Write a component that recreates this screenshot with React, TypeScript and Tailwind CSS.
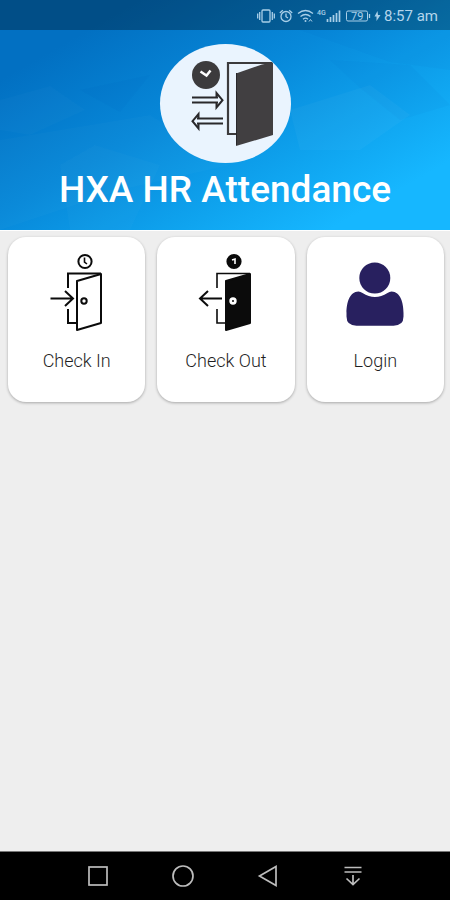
import React from "react";

function HeaderArtwork() {
  return (
    <svg
      className="absolute inset-0 h-full w-full"
      viewBox="0 0 450 230"
      preserveAspectRatio="none"
      aria-hidden="true"
    >
      <defs>
        <linearGradient id="sky" gradientUnits="userSpaceOnUse" x1="140" y1="0" x2="285" y2="255">
          <stop offset="0" stopColor="#0270c2" />
          <stop offset="0.4" stopColor="#0788d9" />
          <stop offset="0.75" stopColor="#0fa4ef" />
          <stop offset="1" stopColor="#16b7ff" />
        </linearGradient>
      </defs>
      <rect width="450" height="230" fill="url(#sky)" />
      <g fill="#ffffff">
        <polygon points="0,100 50,86 85,110 30,135 0,130" opacity="0.02" />
        <polygon points="0,140 150,115 230,165 120,190 0,230" opacity="0.02" />
        <polygon points="60,165 95,145 160,165 130,230 70,230" opacity="0.02" />
        <polygon points="290,110 370,85 410,115 360,150 300,150" opacity="0.03" />
      </g>
      <g fill="#0058b0">
        <polygon points="330,60 410,65 450,105 400,120 360,88" opacity="0.04" />
        <polygon points="80,90 150,75 120,112" opacity="0.05" />
        <polygon points="300,30 450,30 450,70 390,62" opacity="0.04" />
      </g>
    </svg>
  );
}

function StatusBar() {
  return (
    <div className="relative flex h-[30px] items-center justify-end bg-black/30 pr-3 pt-[2px] text-[#a9cfe8]">
      <svg width="114" height="20" viewBox="0 0 114 20" fill="none" stroke="currentColor" strokeWidth="1.3" aria-hidden="true">
        <rect x="5" y="4" width="8" height="12" rx="1" />
        <path d="M2.700 6v8M15.300 6v8M.700 7.500v5M17.300 7.500v5" />
        <circle cx="29" cy="10.500" r="5" />
        <path d="M29 7.500v3.200l2 1.300M22.800 7l3-2.800M35.200 7l-3-2.800" />
        <path d="M41 7.500q7.500-6 15 0M43.500 10.500q5-4 10 0M46 13.200q2.500-2 5 0" />
        <circle cx="48.500" cy="15" r="1" fill="currentColor" stroke="none" />
        <path d="M52 15.500l1.500-2 1.500 2" strokeWidth="1" />
        <path d="M70.500 16v-3M73.500 16v-5M76.500 16V9M79.500 16V7M82.500 16V4.500" strokeWidth="1.700" />
        <rect x="89.500" y="5" width="21" height="10" rx="1.500" strokeWidth="1" />
        <path d="M112.500 8v4" />
        <text x="60" y="9" fontSize="7" fontFamily="Roboto, sans-serif" fontWeight="500" fill="currentColor" stroke="none">4G</text>
        <text x="94" y="14" fontSize="11" fontFamily="Roboto, sans-serif" fill="currentColor" stroke="none">79</text>
      </svg>
      <svg className="ml-[3px]" width="7" height="12" viewBox="0 0 7 12" fill="currentColor" aria-hidden="true">
        <path d="M3.500 1L.500 6.500h2L2.500 11l4-6h-2.500z" />
      </svg>
      <time className="ml-[3px] text-[15px] leading-5 text-[#b4d5eb]">8:57 am</time>
    </div>
  );
}

function AppLogo() {
  return (
    <svg width="132" height="120" viewBox="159 44 132 120" role="img" aria-label="HXA HR Attendance logo">
      <ellipse cx="225.500" cy="103.500" rx="65.500" ry="59.500" fill="#eaf4fe" />
      <circle cx="206" cy="75" r="14" fill="#3c3b3d" />
      <path d="M200.500 71.500l6 4 4-5" fill="none" stroke="#fff" strokeWidth="2.500" />
      <g fill="none" stroke="#29282b" strokeWidth="2">
        <path d="M192 97.500h26M192 102.500h26M216.500 97.500v-4.500l6 7.200-6 7.200v-4.500" />
        <path d="M223 118.500h-26M223 123.500h-26M198.500 118.500v-4.500l-6 7.200 6 7.200v-4.500" />
        <path d="M237 134h-9V63h44" strokeWidth="2.200" stroke="#3c3b3d" />
      </g>
      <path d="M236 73.500L262 64.500 273 62.500V135L236 146z" fill="#413f41" />
      <path d="M236.500 73V145" stroke="#29282b" />
    </svg>
  );
}

function DoorIcon({ leaving }: { leaving: boolean }) {
  return (
    <svg width="56" height="80" viewBox="48 252 56 80" fill="none" stroke="#0b0b0b" strokeWidth="2" aria-hidden="true">
      <circle cx="84" cy="261.500" r="6.600" fill={leaving ? "#0b0b0b" : "none"} />
      {leaving ? (
        <path d="M82 260l3-1v5" stroke="#fff" strokeWidth="1.600" />
      ) : (
        <path d="M83.500 257.500v4.500l2.500 2" strokeWidth="1.600" />
      )}
      <path d="M67 288V273.500H100M67 309v14h9" strokeWidth={leaving ? 1.6 : 2} />
      <path d="M76 281L100 274v49L76 330z" fill={leaving ? "#0b0b0b" : "#fff"} strokeLinejoin="round" />
      <circle cx="83" cy="301" r="2.700" fill="#fff" stroke={leaving ? "#fff" : "#0b0b0b"} />
      {leaving && <circle cx="83" cy="301" r="1" fill="#0b0b0b" stroke="none" />}
      {leaving ? <path d="M72 298.500H50M58 291l-8 7.500 8 7.500" /> : <path d="M49.500 298.500H72M64 291l8 7.500-8 7.500" />}
    </svg>
  );
}

function UserIcon() {
  return (
    <svg width="58" height="80" viewBox="345.500 252 58 80" fill="#28205f" aria-hidden="true">
      <circle cx="374.300" cy="278" r="15.500" />
      <path d="M358 291.500C349 291.500 346 303 346 313v3.500Q346 325.700 356 325.700H393Q403 325.700 403 316.500V313C403 303 400 291.500 391 291.500Q389 291.500 387 293Q374.500 301 362 293Q360 291.500 358 291.500z" />
    </svg>
  );
}

function ActionCard({ label, children }: { label: string; children: React.ReactNode }) {
  return (
    <button
      type="button"
      className="flex h-[165px] flex-col items-center rounded-[18px] bg-white pt-[15px] shadow-[0_1px_3px_rgba(0,0,0,0.3)]"
    >
      {children}
      <span className="mt-[17px] text-lg font-light leading-6 text-[#1f1f1f]">{label}</span>
    </button>
  );
}

function NavButton({ label, children }: { label: string; children: React.ReactNode }) {
  return (
    <button type="button" aria-label={label} className="flex h-12 w-[85px] items-center justify-center">
      <svg width="24" height="24" viewBox="0 0 24 24" fill="none" stroke="#bdbdbd" strokeWidth="1.700" aria-hidden="true">
        {children}
      </svg>
    </button>
  );
}

export default function App() {
  return (
    <div className="flex min-h-screen flex-col bg-[#eeeeee] font-[Roboto,'Noto_Sans',sans-serif]">
      <header className="relative">
        <HeaderArtwork />
        <StatusBar />
        <div className="relative flex flex-col items-center pb-[18px] pt-[14px]">
          <AppLogo />
          <h1 className="mt-1 text-[37px] font-medium leading-[44px] text-white">HXA HR Attendance</h1>
        </div>
      </header>
      <main className="grid flex-1 grid-cols-3 content-start gap-3 border-t border-white pl-2 pr-[6px] pt-[6px]">
        <ActionCard label="Check In">
          <DoorIcon leaving={false} />
        </ActionCard>
        <ActionCard label="Check Out">
          <DoorIcon leaving />
        </ActionCard>
        <ActionCard label="Login">
          <UserIcon />
        </ActionCard>
      </main>
      <nav aria-label="System navigation" className="flex h-[49px] items-center justify-center border-t border-[#777777] bg-black">
        <NavButton label="Recent apps">
          <rect x="3" y="3" width="18" height="18" />
        </NavButton>
        <NavButton label="Home">
          <circle cx="12" cy="12" r="10" />
        </NavButton>
        <NavButton label="Back">
          <path d="M20 2.500v19L3.500 12z" />
        </NavButton>
        <NavButton label="Hide navigation">
          <path d="M3.500 3.500h17M3.500 8h17M12 11v9M5.500 14.500l6.500 6 6.500-6" />
        </NavButton>
      </nav>
    </div>
  );
}
